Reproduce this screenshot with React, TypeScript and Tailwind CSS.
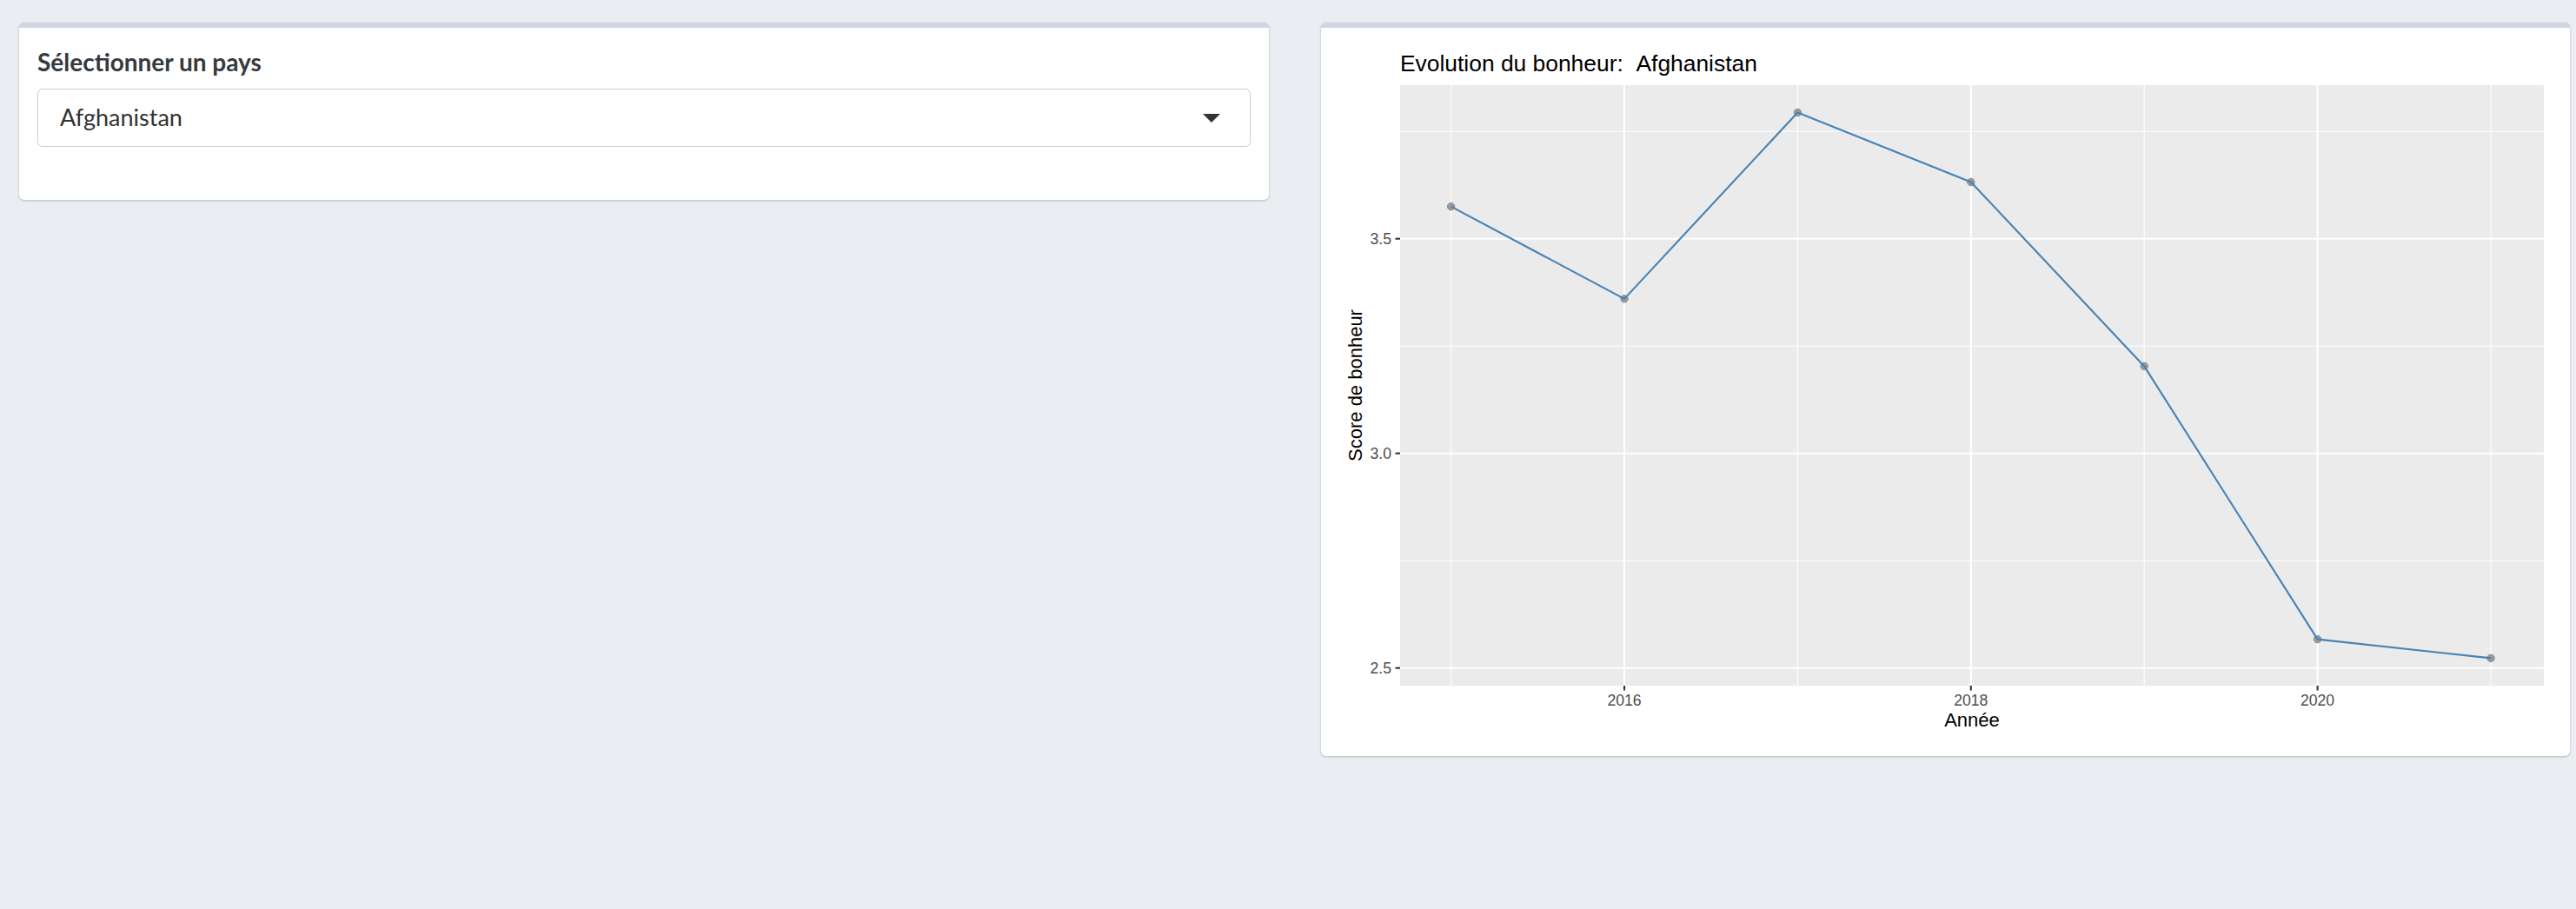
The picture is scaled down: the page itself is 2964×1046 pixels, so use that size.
import React from "react";

const data: [number, number][] = [
  [2015, 3.575],
  [2016, 3.36],
  [2017, 3.794],
  [2018, 3.632],
  [2019, 3.203],
  [2020, 2.567],
  [2021, 2.523],
];

const X0 = 71;
const X1 = 1387;
const Y0 = 46;
const Y1 = 737;
const xs = (yr: number) => 329 + (yr - 2016) * 199.4;
const ys = (v: number) => 222.7 + (3.5 - v) * 494;

function Chart() {
  const majorX = [2016, 2018, 2020];
  const minorX = [2015, 2017, 2019, 2021];
  const majorY = [2.5, 3.0, 3.5];
  const minorY = [2.75, 3.25, 3.75];
  const pts = data.map(([a, b]) => `${xs(a)},${ys(b)}`).join(" ");
  return (
    <svg width={1396} height={798} className="block" style={{ fontFamily: '"Liberation Sans", Arial, sans-serif' }}>
      <text x={X0} y={30} fontSize={26.4} fill="#000">
        Evolution du bonheur:{"\u00a0\u00a0"}Afghanistan
      </text>
      <rect x={X0} y={Y0} width={X1 - X0} height={Y1 - Y0} fill="#EBEBEB" />
      {minorY.map((v) => (
        <line key={"my" + v} x1={X0} x2={X1} y1={ys(v)} y2={ys(v)} stroke="#fff" strokeWidth={1.1} />
      ))}
      {minorX.map((v) => (
        <line key={"mx" + v} x1={xs(v)} x2={xs(v)} y1={Y0} y2={Y1} stroke="#fff" strokeWidth={1.1} />
      ))}
      {majorY.map((v) => (
        <line key={"My" + v} x1={X0} x2={X1} y1={ys(v)} y2={ys(v)} stroke="#fff" strokeWidth={2.1} />
      ))}
      {majorX.map((v) => (
        <line key={"Mx" + v} x1={xs(v)} x2={xs(v)} y1={Y0} y2={Y1} stroke="#fff" strokeWidth={2.1} />
      ))}
      {data.map(([a, b]) => (
        <circle key={a} cx={xs(a)} cy={ys(b)} r={4.2} fill="#9a9a9a" stroke="#8a8a8a" strokeWidth={1} />
      ))}
      <polyline points={pts} fill="none" stroke="#4682B4" strokeWidth={2.1} strokeLinejoin="round" />
      {majorY.map((v) => (
        <g key={"ty" + v}>
          <line x1={X0 - 5.5} x2={X0} y1={ys(v)} y2={ys(v)} stroke="#333" strokeWidth={2.1} />
          <text x={61} y={ys(v) + 6.3} fontSize={17.6} fill="#4D4D4D" textAnchor="end">
            {v.toFixed(1)}
          </text>
        </g>
      ))}
      {majorX.map((v) => (
        <g key={"tx" + v}>
          <line x1={xs(v)} x2={xs(v)} y1={Y1} y2={Y1 + 5.5} stroke="#333" strokeWidth={2.1} />
          <text x={xs(v)} y={760} fontSize={17.6} fill="#4D4D4D" textAnchor="middle">
            {v}
          </text>
        </g>
      ))}
      <text x={(X0 + X1) / 2} y={784} fontSize={22} fill="#000" textAnchor="middle">
        Année
      </text>
      <text
        x={0}
        y={0}
        fontSize={22}
        fill="#000"
        textAnchor="middle"
        transform={`translate(27 ${(Y0 + Y1) / 2}) rotate(-90)`}
      >
        Score de bonheur
      </text>
    </svg>
  );
}

export default function App() {
  return (
    <div
      className="min-h-[1046px] w-full bg-[#eaedf2] pl-[22px] pr-[7px] pt-[26px]"
      style={{ fontFamily: 'Lato, "Noto Sans", sans-serif' }}
    >
      <div className="flex items-start gap-[60px]">
        <div className="flex-1 rounded-[6px] border-t-[6px] border-[#d2d6de] bg-white shadow-[0_0_1px_rgba(0,0,0,0.125),0_1px_3px_rgba(0,0,0,0.2)]">
          <div className="px-[21px] pt-[22px] pb-[61px]">
            <div className="mb-[14px] text-[28px] font-bold leading-[34px] text-[#343a40]">Sélectionner un pays</div>
            <div className="flex h-[67px] items-center justify-between rounded-[6px] border border-[#cccccc] pl-[25px] pr-[34px]">
              <span className="text-[27px] text-[#333]">Afghanistan</span>
              <svg width="20" height="10" viewBox="0 0 20 10">
                <polygon points="0,0 20,0 10,10" fill="#333" />
              </svg>
            </div>
          </div>
        </div>
        <div className="flex-1 rounded-[6px] border-t-[6px] border-[#d2d6de] bg-white shadow-[0_0_1px_rgba(0,0,0,0.125),0_1px_3px_rgba(0,0,0,0.2)]">
          <div className="p-[20px]">
            <Chart />
          </div>
        </div>
      </div>
    </div>
  );
}
